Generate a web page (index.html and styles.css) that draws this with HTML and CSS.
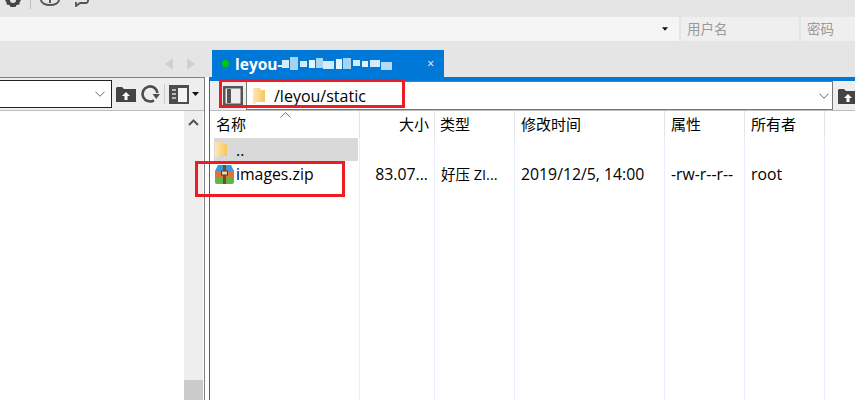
FILE: index.html
```html
<!DOCTYPE html>
<html lang="zh">
<head>
<meta charset="utf-8">
<title>FileZilla</title>
<link rel="stylesheet" href="styles.css">
</head>
<body>
<div class="app">
  <div class="toolbar">
    <svg class="tool-ic gear" viewBox="0 0 16 7"><path d="M0 0h16l-1.500 2.500 0 2-3 .5-1 2H5.500l-1-2-3-.5v-2z" fill="#444"/><path d="M5 0a3 3 0 0 0 6 0z" fill="#e5e5e5"/></svg>
    <span class="tool-sep"></span>
    <svg class="tool-ic info" viewBox="0 0 20 7"><path d="M1 0a9 5 0 0 0 18 0" fill="none" stroke="#555" stroke-width="2"/><path d="M10 0v3" stroke="#555" stroke-width="2"/></svg>
    <svg class="tool-ic chat" viewBox="0 0 16 7"><path d="M15 0v1a2 2 0 0 1-2 2H7L3 6V3H2" fill="none" stroke="#555" stroke-width="1.800"/></svg>
  </div>
  <div class="connect">
    <div class="host"><svg class="caret" viewBox="0 0 7 4"><path d="M0 0h7L3.500 4z" fill="#111"/></svg></div>
    <div class="field user">用户名</div>
    <div class="field pass">密码</div>
  </div>
  <div class="tabbar">
    <div class="tab-nav">
      <svg viewBox="0 0 8 12"><path d="M8 0v12L0 6z" fill="#cfcfcf"/></svg>
      <svg viewBox="0 0 8 12"><path d="M0 0v12l8-6z" fill="#cfcfcf"/></svg>
    </div>
    <div class="tab">
      <span class="dot"></span>
      <span class="tab-name">leyou-</span>
      <svg class="blur" viewBox="0 0 112 14">
        <g fill="#d4ebfb">
          <rect x="0" y="3" width="7" height="8"/><rect x="8" y="0" width="8" height="13" fill="#a4d3f4"/><rect x="18" y="4" width="7" height="6"/><rect x="27" y="3" width="6" height="8" fill="#e6f3fc"/>
          <rect x="34" y="1" width="7" height="10" fill="#a9d6f5"/><rect x="41" y="4" width="11" height="8"/><rect x="54" y="2" width="6" height="10" fill="#e6f3fc"/><rect x="61" y="1" width="8" height="11" fill="#a4d3f4"/>
          <rect x="71" y="3" width="7" height="6"/><rect x="80" y="4" width="6" height="6" fill="#e6f3fc"/><rect x="88" y="3" width="10" height="7"/><rect x="99" y="5" width="11" height="8" fill="#b5dbf6"/>
        </g>
      </svg>
      <span class="tab-close">×</span>
    </div>
  </div>
  <div class="main">
    <section class="pane-left">
      <div class="pathbar left-bar">
        <div class="pathbox left-box"><svg class="chev" viewBox="0 0 11 6"><path d="M.5.5 5.500 5.500 10.500.5" fill="none" stroke="#555"/></svg></div>
        <svg class="ic-up" viewBox="0 0 20 16"><path d="M0 3V2l1-1h5l2 2h12v13H0z" fill="#444"/><path d="M10 6l4 4h-2.500v4h-3v-4H6z" fill="#fff"/></svg>
        <svg class="ic-refresh" viewBox="0 0 20 20"><path d="M17.500 9A7.500 7.500 0 1 0 14 16.300" fill="none" stroke="#4d4d4d" stroke-width="2.600"/><path d="M12.500 10h7.500l-3.700 5z" fill="#4d4d4d"/></svg>
        <span class="bar-sep"></span>
        <svg class="ic-view" viewBox="0 0 20 19"><rect width="20" height="19" fill="#4d4d4d"/><rect x="9" y="3" width="9" height="14" fill="#f4f4f4"/><path d="M3 5h4M3 9h4M3 13h4" stroke="#ddd" stroke-width="1.500"/></svg>
        <svg class="ic-caret" viewBox="0 0 7 4"><path d="M0 0h7L3.500 4z" fill="#111"/></svg>
      </div>
      <div class="tree">
        <div class="scroll">
          <svg class="scroll-up" viewBox="0 0 11 7"><path d="M1 6l4.500-4.500L10 6" fill="none" stroke="#555" stroke-width="2"/></svg>
          <div class="thumb"></div>
        </div>
      </div>
    </section>
    <section class="pane-right">
      <div class="pathbar right-bar">
        <svg class="ic-panel" viewBox="0 0 20 20"><rect x="1.250" y="1.250" width="17.500" height="17.500" fill="#eee" stroke="#555" stroke-width="2.500"/><rect x="4" y="3" width="4" height="14" fill="#555"/></svg>
        <div class="pathbox right-box">
          <svg class="folder" viewBox="0 0 12 16"><defs><linearGradient id="fg" x1="0" x2="1"><stop offset="0" stop-color="#fde9b0"/><stop offset="1" stop-color="#f5c65f"/></linearGradient></defs><path d="M0 0h7l1 2h4v12H3l-1 2H0z" fill="url(#fg)"/></svg>
          <span class="path-text">/leyou/static</span>
          <svg class="chev" viewBox="0 0 11 6"><path d="M.5.5 5.500 5.500 10.500.5" fill="none" stroke="#555"/></svg>
        </div>
        <svg class="ic-up" viewBox="0 0 20 16"><path d="M0 3V2l1-1h5l2 2h12v13H0z" fill="#444"/><path d="M10 6l4 4h-2.500v4h-3v-4H6z" fill="#fff"/></svg>
      </div>
      <div class="table">
        <div class="row head">
          <div class="cell name"><span class="pad">名称</span><svg class="sort" viewBox="0 0 11 6"><path d="M.5 5.500 5.500.5l5 5" fill="none" stroke="#777"/></svg></div>
          <div class="cell size">大小</div>
          <div class="cell type">类型</div>
          <div class="cell mtime">修改时间</div>
          <div class="cell attr">属性</div>
          <div class="cell owner">所有者</div>
        </div>
        <div class="row parent">
          <div class="cell name"><div class="sel">
            <svg class="folder" viewBox="0 0 12 16"><path d="M0 0h7l1 2h4v12H3l-1 2H0z" fill="url(#fg)"/></svg>
            <span class="fname">..</span></div></div>
          <div class="cell size"></div><div class="cell type"></div><div class="cell mtime"></div><div class="cell attr"></div><div class="cell owner"></div>
        </div>
        <div class="row file">
          <div class="cell name">
            <svg class="zip" viewBox="0 0 19 19">
              <path d="M3 0h13l3 6H0z" fill="#3a9ad9"/><rect y="6" width="19" height="6" fill="#e2703a"/><path d="M0 12h19v5a2 2 0 0 1-2 2H2a2 2 0 0 1-2-2z" fill="#5fb548"/>
              <rect x="8" y="0" width="3" height="19" fill="#7a4a26"/><rect x="6.500" y="6" width="6" height="4" fill="#e9d9b8" stroke="#5e3a1e"/>
            </svg>
            <span class="fname">images.zip</span>
          </div>
          <div class="cell size">83.07...</div>
          <div class="cell type">好压 ZI...</div>
          <div class="cell mtime">2019/12/5, 14:00</div>
          <div class="cell attr">-rw-r--r--</div>
          <div class="cell owner">root</div>
        </div>
        <div class="row fill">
          <div class="cell name"></div><div class="cell size"></div><div class="cell type"></div><div class="cell mtime"></div><div class="cell attr"></div><div class="cell owner"></div>
        </div>
      </div>
    </section>
  </div>
  <div class="mark mark-path"></div>
  <div class="mark mark-file"></div>
</div>
</body>
</html>
```
FILE: styles.css
```css
* { box-sizing: border-box; }
html, body { margin: 0; padding: 0; }
body { width: 855px; height: 400px; overflow: hidden; background: #fff; color: #000; font-family: "Open Sans", "Noto Sans CJK SC", sans-serif; font-size: 15.8px; }
svg { display: block; flex: none; }

.app { position: relative; width: 855px; height: 400px; display: flex; flex-direction: column; }

.toolbar { height: 17px; background: #e5e5e5; display: flex; align-items: flex-start; overflow: hidden; padding-left: 5px; }
.tool-ic { height: 7px; }
.gear { width: 16px; }
.tool-sep { width: 1px; height: 9px; background: #bdbdbd; margin-left: 9px; }
.info { margin-left: 9px; width: 20px; }
.chat { margin-left: 13px; width: 16px; }

.connect { height: 24px; display: flex; background: #e5e5e5; }
.host { width: 679px; background: #f5f5f5; display: flex; justify-content: flex-end; align-items: center; padding-right: 11px; }
.caret { width: 6px; height: 4px; }
.field { background: #efefef; color: #9a9a9a; font-size: 13.500px; padding-left: 6px; line-height: 24px; }
.user { width: 118px; margin-left: 2px; }
.pass { width: 54px; margin-left: 2px; }

.tabbar { height: 36px; background: #e5e5e5; display: flex; align-items: flex-end; }
.tab-nav { width: 212px; height: 27px; display: flex; align-items: center; gap: 14px; padding-left: 165px; }
.tab-nav svg { width: 8px; height: 12px; }
.tab { width: 232px; height: 27px; background: #0078d7; color: #fff; display: flex; align-items: center; padding-left: 10px; padding-right: 10px; }
.dot { width: 7px; height: 7px; border-radius: 50%; background: #00c800; margin-right: 6px; }
.tab-name { font-weight: 700; font-size: 15.500px; }
.blur { width: 112px; height: 14px; filter: blur(.7px); }
.tab-close { margin-left: auto; font-size: 12px; line-height: 1; }

.main { height: 323px; display: flex; }

.pane-left { width: 205px; background: #fff; display: flex; flex-direction: column; border-top: 1px solid #808080; border-right: 1px solid #808080; }
.pathbar { height: 33px; display: flex; align-items: center; background: #eee; border-bottom: 1px solid #bdbdbd; overflow: hidden; }
.pathbox { height: 28px; background: #fff; display: flex; align-items: center; flex: none; }
.left-box { width: 112px; border: 1px solid #222; border-left: none; justify-content: flex-end; padding-right: 6px; }
.chev { width: 10px; height: 6px; }
.ic-up { width: 20px; height: 16px; }
.left-bar .ic-up { margin-left: 4px; }
.ic-refresh { width: 20px; height: 20px; margin-left: 4px; }
.bar-sep { width: 1px; height: 20px; background: #ccc; margin-left: 4px; flex: none; }
.ic-view { width: 20px; height: 19px; margin-left: 4px; }
.ic-caret { width: 7px; height: 4px; margin-left: 3px; }

.tree { flex: 1; display: flex; justify-content: flex-end; padding-right: 1px; }
.scroll { width: 19px; background: #eee; display: flex; flex-direction: column; justify-content: space-between; align-items: center; padding-top: 8px; }
.scroll-up { width: 11px; height: 7px; }
.thumb { width: 19px; height: 20px; background: #cbcbcb; }

.pane-right { flex: 1; margin-left: 4px; display: flex; flex-direction: column; border-top: 4px solid #0078d7; border-left: 1px solid #0078d7; min-width: 0; }
.right-bar { height: 30px; padding-left: 13px; }
.ic-panel { width: 20px; height: 20px; }
.right-box { width: 587px; height: 29px; margin-left: 3px; border: 1px solid #777; padding-left: 6px; }
.right-box .folder { margin-right: 9px; }
.path-text { flex: 1; font-size: 16px; }
.right-box .chev { margin-right: 3px; }
.right-bar .ic-up { margin-left: 5px; }

.folder { width: 12px; height: 16px; }
.table { flex: 1; display: flex; flex-direction: column; }
.row { display: grid; grid-template-columns: 150px 75px 80px 150px 80px 80px 1fr; }
.cell { border-right: 1px solid #e6effa; white-space: nowrap; overflow: hidden; }
.head { height: 27px; line-height: 27px; font-size: 15px; }
.head .cell { border-right-color: #e5e5e5; }
.name { padding-left: 4px; display: flex; align-items: center; position: relative; }
.pad { padding-left: 2px; }
.sort { position: absolute; left: 70px; top: 1px; width: 11px; height: 6px; }
.size { text-align: right; padding-right: 6px; }
.head .size { padding-right: 5px; }
.type, .mtime, .attr, .owner { padding-left: 6px; }
.head .type { padding-left: 5px; }
.parent { height: 23px; }
.sel { width: 144px; height: 23px; background: #d9d9d9; display: flex; align-items: center; padding-left: 1px; }
.sel .fname { margin-left: 9px; }
.fname { margin-left: 3px; }
.file { height: 27px; line-height: 27px; }
.zip { width: 19px; height: 19px; margin-left: 1px; }
.file .fname { margin-left: 2px; }
.file .type { font-size: 14.500px; }
.fill { flex: 1; }

.mark { position: absolute; border: 3px solid #ed1c24; pointer-events: none; }
.mark-path { left: 219px; top: 79px; width: 186px; height: 29px; }
.mark-file { left: 195px; top: 161px; width: 150px; height: 36px; }
```
